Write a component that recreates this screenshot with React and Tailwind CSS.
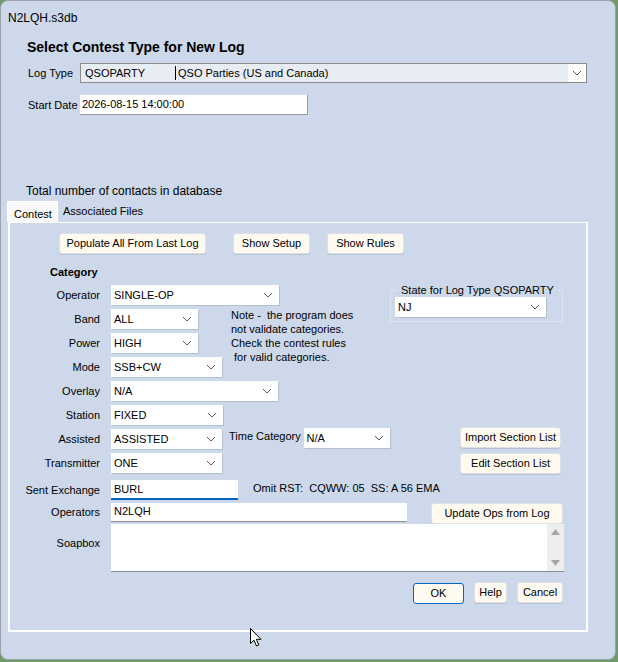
import React from 'react';

// small thin chevron used by every drop-down
const Chevron = () => (
  <svg width="10" height="6" viewBox="0 0 10 6" className="shrink-0">
    <path d="M1 1l4 4 4-4" fill="none" stroke="#5a5a5a" strokeWidth="1" />
  </svg>
);

const Drop = ({ value, w }) => (
  <div className={`${w} h-[20px] bg-white flex items-center justify-between pl-[3px] pr-[6px] shadow-[1px_1px_0_#b4bfcd]`}>
    <span>{value}</span>
    <Chevron />
  </div>
);

const Btn = ({ children, w, ok }) => (
  <div
    className={`${w} h-[21px] bg-[#fffaf0] rounded-[3px] flex items-center justify-center ${
      ok ? 'border border-[#0067c0]' : 'border border-[#dde1e6] shadow-[0_1px_0_#b9c2ce]'
    }`}
  >
    {children}
  </div>
);

const Label = ({ children }) => <div className="pr-[11px] text-right">{children}</div>;

export default function App() {
  return (
    <div className="w-[618px] h-[662px] bg-[#6f9a6c] font-['Liberation_Sans',Arial,sans-serif] text-[11px] text-black overflow-hidden">
      <div className="w-[616px] h-[660px] bg-[#cdd9ea] rounded-[8px] border border-[#9da3aa] flex flex-col">
        {/* caption */}
        <div className="h-[33px] pl-[7px] pt-[8px] text-[12px]">N2LQH.s3db</div>

        <div className="pl-[26px] text-[14px] font-bold leading-[18px] pt-[4px]">Select Contest Type for New Log</div>

        <div className="flex items-center mt-[7px] pl-[27px] h-[20px]">
          <div className="w-[52px]">Log Type</div>
          <div className="w-[507px] h-[20px] border border-[#8a8a8a] bg-[#e8edf4] flex items-center">
            <span className="w-[94px] pl-[4px]">QSOPARTY</span>
            <span className="w-px h-[14px] bg-black" />
            <span className="pl-[2px] flex-1">QSO Parties (US and Canada)</span>
            <span className="w-[18px] h-[18px] bg-white flex items-center justify-center">
              <Chevron />
            </span>
          </div>
        </div>

        <div className="flex items-center mt-[12px] pl-[27px] h-[20px]">
          <div className="w-[52px]">Start Date</div>
          <div className="w-[228px] h-[20px] bg-white border-b border-r border-[#9a9a9a] flex items-center pl-[2px]">
            2026-08-15 14:00:00
          </div>
        </div>

        <div className="pl-[25px] mt-[69px] text-[12px] leading-[14px]">Total number of contacts in database</div>

        {/* tabs */}
        <div className="flex items-end pl-[6px] mt-[3px] h-[21px]">
          <div className="w-[51px] h-[21px] bg-[#f9f9f9] border-t border-l border-r border-white pl-[6px] pt-[4px]">Contest</div>
          <div className="pl-[5px] pb-[3px]">Associated Files</div>
        </div>

        <div className="ml-[7px] w-[580px] h-[410px] border-2 border-white border-t-1">
          {/* top buttons */}
          <div className="flex mt-[10px] pl-[49px]">
            <Btn w="w-[147px]">Populate All From Last Log</Btn>
            <div className="ml-[27px]"><Btn w="w-[77px]">Show Setup</Btn></div>
            <div className="ml-[17px]"><Btn w="w-[77px]">Show Rules</Btn></div>
          </div>

          <div className="pl-[40px] mt-[11px] font-bold leading-[14px]">Category</div>

          <div className="grid grid-cols-[101px_118px_161px_175px] auto-rows-[24px] items-center mt-[4px]">
            {/* row 1 */}
            <Label>Operator</Label>
            <div className="col-span-2"><Drop value="SINGLE-OP" w="w-[168px]" /></div>
            <div className="row-span-2 self-start">
              <fieldset className="w-[173px] mt-[1px] border border-[#dfe6ef] px-[4px] pb-[4px]">
                <legend className="px-[4px] ml-[2px] leading-[13px]">State for Log Type QSOPARTY</legend>
                <Drop value="NJ" w="w-[151px]" />
              </fieldset>
            </div>

            {/* row 2 */}
            <Label>Band</Label>
            <Drop value="ALL" w="w-[87px]" />
            <div className="row-span-3 self-start pt-[1px] pl-[2px] leading-[14px]">
              Note - &nbsp;the program does<br />
              not validate categories.<br />
              Check the contest rules<br />
              &nbsp;for valid categories.
            </div>

            {/* row 3 */}
            <Label>Power</Label>
            <Drop value="HIGH" w="w-[87px]" />
            <div />

            {/* row 4 */}
            <Label>Mode</Label>
            <Drop value="SSB+CW" w="w-[111px]" />
            <div />

            {/* row 5 */}
            <Label>Overlay</Label>
            <div className="col-span-2"><Drop value="N/A" w="w-[167px]" /></div>
            <div />

            {/* row 6 */}
            <Label>Station</Label>
            <Drop value="FIXED" w="w-[112px]" />
            <div />
            <div />

            {/* row 7 */}
            <Label>Assisted</Label>
            <Drop value="ASSISTED" w="w-[111px]" />
            <div className="flex items-center self-start pt-[1px]">
              <span className="w-[75px] leading-[14px] -mt-[5px]">Time Category</span>
              <Drop value="N/A" w="w-[87px]" />
            </div>
            <div className="flex justify-end pr-[4px] self-start">
              <Btn w="w-[101px]">Import Section List</Btn>
            </div>

            {/* row 8 */}
            <Label>Transmitter</Label>
            <Drop value="ONE" w="w-[111px]" />
            <div />
            <div className="flex justify-end pr-[4px] self-start pt-[2px]">
              <Btn w="w-[101px]">Edit Section List</Btn>
            </div>
          </div>

          {/* exchange */}
          <div className="flex items-center mt-[5px] h-[20px]">
            <div className="w-[101px]"><Label>Sent Exchange</Label></div>
            <div className="w-[127px] h-[20px] bg-white border-b-2 border-[#0067c0] flex items-center pl-[3px]">BURL</div>
            <div className="ml-[15px] -mt-[4px]">Omit RST: &nbsp;CQWW: 05 &nbsp;SS: A 56 EMA</div>
          </div>

          <div className="flex items-center mt-[2px] h-[20px]">
            <div className="w-[101px]"><Label>Operators</Label></div>
            <div className="w-[296px] h-[19px] bg-white border-b border-[#8d8d8d] flex items-center pl-[3px]">N2LQH</div>
            <div className="ml-[24px] mt-[2px]"><Btn w="w-[132px]">Update Ops from Log</Btn></div>
          </div>

          <div className="flex mt-[2px]">
            <div className="w-[101px] pt-[11px]"><Label>Soapbox</Label></div>
            <div className="w-[453px] h-[48px] bg-white border-b border-[#8d8d8d] flex justify-end">
              <div className="w-[17px] bg-[#eeeeee] flex flex-col items-center justify-between py-[5px]">
                <svg width="9" height="6" viewBox="0 0 9 6"><path d="M0 6L4.5 0L9 6Z" fill="#a6a6a6" /></svg>
                <svg width="9" height="6" viewBox="0 0 9 6"><path d="M0 0L4.5 6L9 0Z" fill="#a6a6a6" /></svg>
              </div>
            </div>
          </div>

          <div className="flex justify-end items-start pr-[23px] mt-[10px]">
            <div className="mt-[1px]"><Btn w="w-[51px]" ok>OK</Btn></div>
            <div className="ml-[10px]"><Btn w="w-[33px]">Help</Btn></div>
            <div className="ml-[10px]"><Btn w="w-[46px]">Cancel</Btn></div>
          </div>
        </div>
      </div>

      {/* mouse pointer over the dialog */}
      <svg width="13" height="20" viewBox="0 0 13 20" className="absolute left-[250px] top-[628px]">
        <path d="M0.5 0.5 L0.5 15.5 L4 12.2 L6.5 18 L8.8 17 L6.4 11.3 L11 11.3 Z" fill="white" stroke="black" strokeWidth="1" />
      </svg>
    </div>
  );
}
